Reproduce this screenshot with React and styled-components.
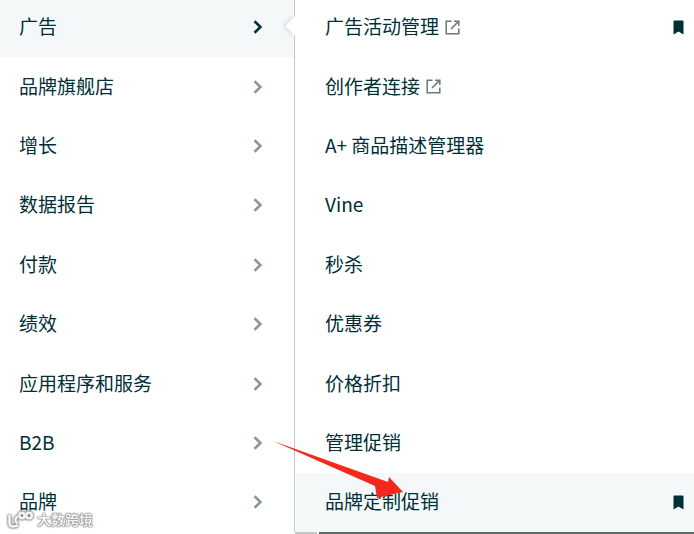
import React from "react";
import styled, { createGlobalStyle } from "styled-components";

const GlobalStyle = createGlobalStyle`
  html, body {
    margin: 0;
    padding: 0;
    background: #fff;
  }
  body {
    font-family: "Noto Sans CJK SC", "Liberation Sans", sans-serif;
    color: #002f36;
  }
`;

const Page = styled.div`
  position: relative;
  width: 694px;
  height: 534px;
  overflow: hidden;
  display: flex;
  background: #fff;
`;

const LeftMenu = styled.ul`
  width: 294px;
  flex: none;
  margin: -2.5px 0 0;
  padding: 0;
  list-style: none;
`;

const Divider = styled.div`
  width: 1px;
  height: 532px;
  flex: none;
  background: #c4c8c9;
`;

const RightPanel = styled.div`
  flex: 1;
  min-width: 0;
  display: flex;
  flex-direction: column;
  height: 534px;
`;

const RightMenu = styled.ul`
  height: 532px;
  overflow: hidden;
  margin: 0;
  padding: 0;
  list-style: none;
`;

const RightList = styled.div`
  margin-top: -2.5px;
`;

const Row = styled.li`
  height: 59.4px;
  box-sizing: border-box;
  display: flex;
  align-items: center;
  font-size: 19px;
  line-height: 24px;
  background: ${(props) => (props.$active ? "#f4f8f9" : "#fff")};
`;

const LeftRow = styled(Row)`
  padding: 0 31px 0 19px;
  justify-content: space-between;
`;

const RightRow = styled(Row)`
  padding: 0 10px 0 29px;
  margin-left: 1px;
`;

const Label = styled.span`
  white-space: nowrap;
  position: relative;
  top: -1px;
`;

const Chevron = styled.svg`
  width: 10px;
  height: 14px;
  fill: none;
  stroke: ${(props) => (props.$active ? "#002f36" : "#89979a")};
  stroke-width: 2.6;
`;

const External = styled.svg`
  width: 15px;
  height: 15px;
  margin-left: 6px;
  fill: none;
  stroke: #6c7778;
  stroke-width: 1.5;
`;

const Bookmark = styled.svg`
  width: 11px;
  height: 15px;
  margin-left: auto;
  fill: #002f36;
`;

const Notch = styled.div`
  position: absolute;
  left: 283px;
  top: 16px;
  width: 22px;
  height: 22px;
  overflow: hidden;
  &::before {
    content: "";
    position: absolute;
    left: 5px;
    top: 3px;
    width: 14px;
    height: 14px;
    background: #fff;
    transform: rotate(45deg);
    box-shadow: -2px 2px 4px rgba(0, 47, 54, 0.1);
  }
`;

const BottomStrip = styled.div`
  display: flex;
  gap: 2px;
  height: 2px;
`;

const StripPiece = styled.div`
  height: 2px;
  width: ${(props) => props.$width || "auto"};
  flex: ${(props) => (props.$grow ? 1 : "none")};
  background: ${(props) => props.$color};
`;

const Arrow = styled.svg`
  position: absolute;
  left: 270px;
  top: 436px;
  width: 140px;
  height: 80px;
`;

const Watermark = styled.div`
  position: absolute;
  left: 7px;
  top: 511px;
  display: flex;
  align-items: center;
  gap: 4px;
  color: #f4f4f4;
  font-size: 14px;
  font-weight: 700;
  line-height: 17px;
  text-shadow: 0 0 1px #666, 0 0 1px #666, 0 0 2px #888;
`;

const WatermarkLogo = styled.svg`
  width: 26px;
  height: 17px;
  fill: none;
  stroke: #f4f4f4;
  stroke-width: 2.6;
  filter: drop-shadow(0 0 1px #666) drop-shadow(0 0 1px #999);
`;

const leftItems = ["广告", "品牌旗舰店", "增长", "数据报告", "付款", "绩效", "应用程序和服务", "B2B", "品牌"];

const rightItems = [
  { label: "广告活动管理", external: true, bookmark: true },
  { label: "创作者连接", external: true },
  { label: "A+ 商品描述管理器" },
  { label: "Vine" },
  { label: "秒杀" },
  { label: "优惠券" },
  { label: "价格折扣" },
  { label: "管理促销" },
  { label: "品牌定制促销", bookmark: true, active: true },
];

const App = () => {
  return (
    <Page>
      <GlobalStyle />
      <LeftMenu>
        {leftItems.map((item, i) => (
          <LeftRow key={item} $active={i === 0}>
            <Label>{item}</Label>
            <Chevron $active={i === 0} viewBox="0 0 10 14">
              <path d="M1.5 1.2 L7.4 7 L1.5 12.8" />
            </Chevron>
          </LeftRow>
        ))}
      </LeftMenu>
      <Divider />
      <RightPanel>
        <RightMenu>
          <RightList>
            {rightItems.map((item) => (
              <RightRow key={item.label} $active={item.active}>
                <Label>{item.label}</Label>
                {item.external && (
                  <External viewBox="0 0 15 15">
                    <path d="M6.5 1.2 H1.2 V13.8 H13.8 V8.5" />
                    <path d="M9 1.2 H13.8 V6 M13.6 1.4 L6 9" />
                  </External>
                )}
                {item.bookmark && (
                  <Bookmark viewBox="0 0 11 15">
                    <path d="M0.5 1.5 Q0.5 0.5 1.5 0.5 H9.5 Q10.5 0.5 10.5 1.5 V14.5 L5.5 11.5 L0.5 14.5 Z" />
                  </Bookmark>
                )}
              </RightRow>
            ))}
          </RightList>
        </RightMenu>
        <BottomStrip>
          <StripPiece $width="22px" $color="#c4c8c9" />
          <StripPiece $grow $color="#5f6666" />
        </BottomStrip>
      </RightPanel>
      <Notch />
      <Arrow viewBox="0 0 140 80">
        <path d="M3 5 L118 46 L119 41 L133 56 L107 62 L105 50 Z" fill="#f5281e" />
      </Arrow>
      <Watermark>
        <WatermarkLogo viewBox="0 0 26 17">
          <path d="M2.5 4 V12 Q2.5 15.5 6 15.5 Q9 15.5 11 14 M11 5 Q6 9 10.5 12.5" />
          <circle cx="15" cy="4.5" r="2.6" />
          <circle cx="22" cy="4.5" r="2.8" />
        </WatermarkLogo>
        <span>大数跨境</span>
      </Watermark>
    </Page>
  );
};

export default App;
